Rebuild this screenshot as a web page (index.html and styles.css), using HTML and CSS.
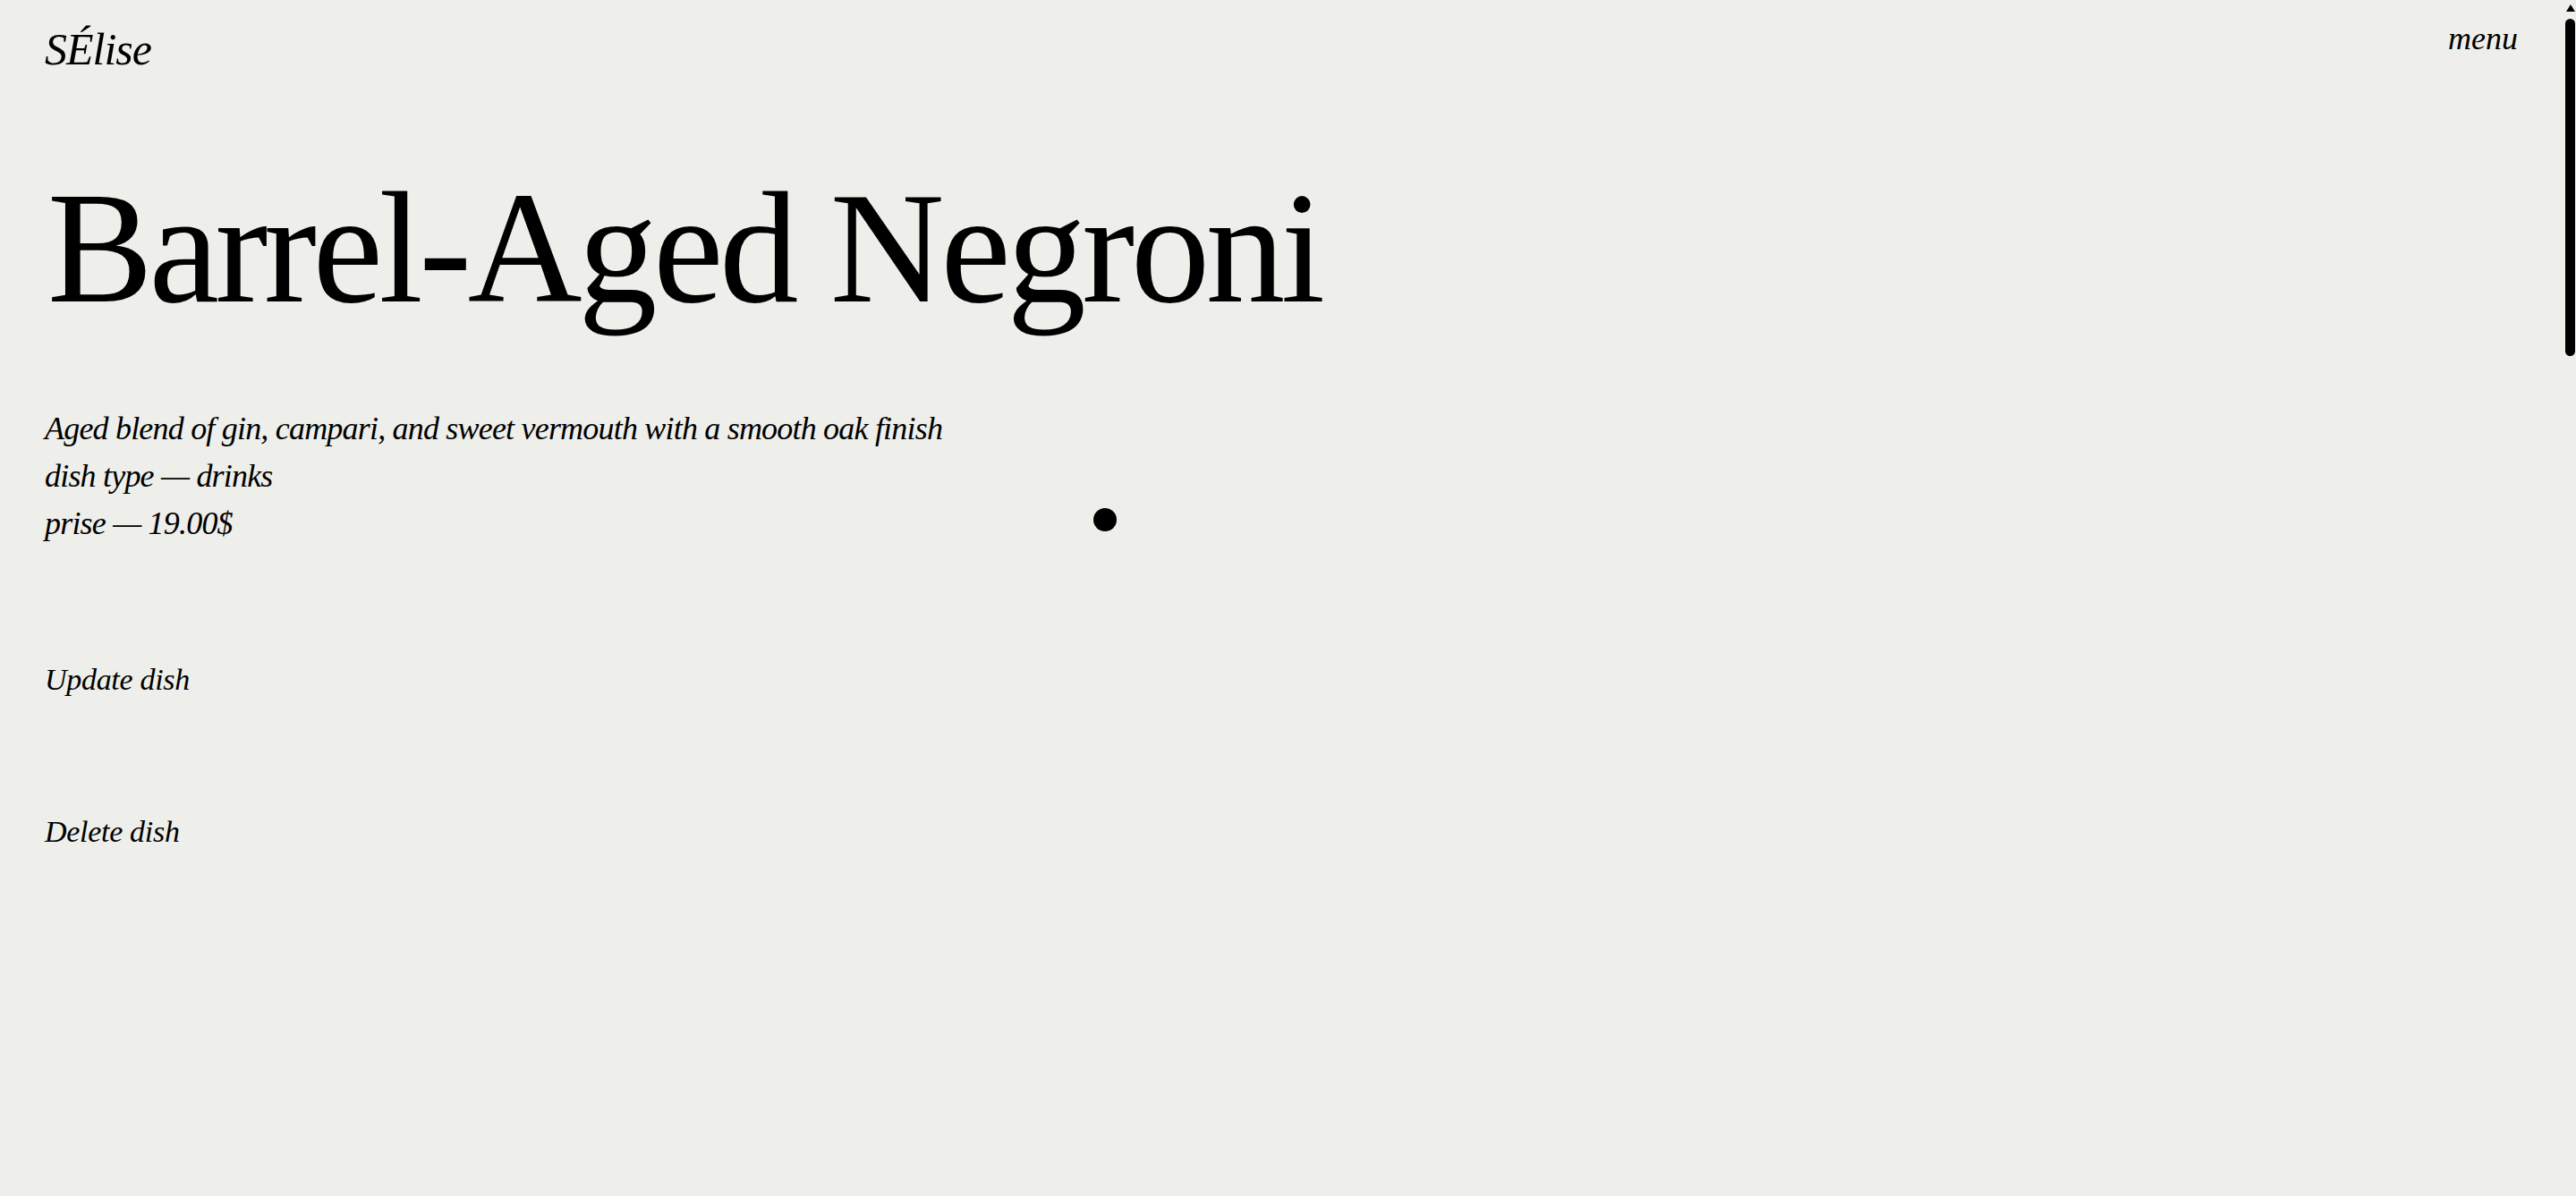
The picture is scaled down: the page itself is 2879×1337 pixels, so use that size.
FILE: index.html
```html
<!DOCTYPE html>
<html lang="en">
<head>
<meta charset="utf-8">
<title>SÉlise — Barrel-Aged Negroni</title>
<link rel="stylesheet" href="styles.css">
</head>
<body>
<div class="page">
  <header class="header">
    <a class="logo" href="#">SÉlise</a>
    <a class="menu" href="#">menu</a>
  </header>
  <main class="dish">
    <h1 class="dish-title">Barrel-Aged Negroni</h1>
    <div class="dish-info">
      <p class="info-line">Aged blend of gin, campari, and sweet vermouth with a smooth oak finish</p>
      <p class="info-line">dish type — drinks</p>
      <p class="info-line">prise — 19.00$</p>
    </div>
    <div class="actions">
      <a class="action" href="#">Update dish</a>
      <a class="action" href="#">Delete dish</a>
    </div>
  </main>
</div>
<div class="cursor-dot"></div>
<div class="scrollbar">
  <div class="scroll-arrow"></div>
  <div class="scroll-thumb"></div>
</div>
</body>
</html>
```

FILE: styles.css
```css
html, body {
  margin: 0;
  padding: 0;
  background: #eeeeea;
  color: #000;
  font-family: "Liberation Serif", "Times New Roman", serif;
  overflow: hidden;
}

a {
  color: inherit;
  text-decoration: none;
}

.page {
  padding: 0 65px 0 50px;
}

.header {
  display: flex;
  justify-content: space-between;
  align-items: flex-start;
  padding-top: 25px;
}

.logo {
  margin-top: 5px;
  font-size: 50px;
  line-height: 50px;
  font-style: italic;
  letter-spacing: -1px;
}

.menu {
  font-size: 36px;
  line-height: 36px;
  font-style: italic;
}

.dish {
  display: flex;
  flex-direction: column;
  align-items: flex-start;
}

.dish-title {
  margin: 109px 0 0 3px;
  font-size: 177px;
  line-height: 177px;
  font-weight: normal;
  letter-spacing: -4.5px;
}

.dish-info {
  margin-top: 87px;
}

.info-line {
  margin: 0;
  font-size: 36px;
  line-height: 53px;
  font-style: italic;
  letter-spacing: -0.8px;
}

.actions {
  display: flex;
  flex-direction: column;
  align-items: flex-start;
  gap: 130px;
  margin-top: 128px;
}

.action {
  font-size: 34px;
  line-height: 40px;
  font-style: italic;
  letter-spacing: -0.3px;
}

.cursor-dot {
  position: absolute;
  left: 1222px;
  top: 568px;
  width: 26px;
  height: 26px;
  border-radius: 50%;
  background: #000;
}

.scrollbar {
  position: fixed;
  top: 0;
  right: 1px;
  width: 11px;
  display: flex;
  flex-direction: column;
  align-items: center;
}

.scroll-arrow {
  margin-top: 5px;
  width: 0;
  height: 0;
  border-left: 5px solid transparent;
  border-right: 5px solid transparent;
  border-bottom: 8px solid #000;
}

.scroll-thumb {
  margin-top: 8px;
  width: 11px;
  height: 377px;
  border-radius: 6px;
  background: #000;
}
```
